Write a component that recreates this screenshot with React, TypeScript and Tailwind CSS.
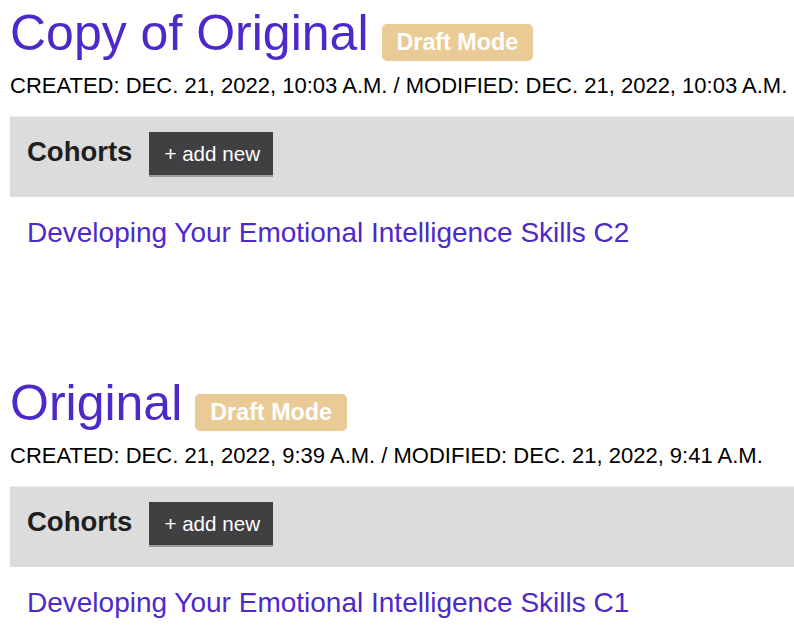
const records = [
  {
    title: "Copy of Original",
    created: "DEC. 21, 2022, 10:03 A.M.",
    modified: "DEC. 21, 2022, 10:03 A.M.",
    cohorts: ["Developing Your Emotional Intelligence Skills C2"],
  },
  {
    title: "Original",
    created: "DEC. 21, 2022, 9:39 A.M.",
    modified: "DEC. 21, 2022, 9:41 A.M.",
    cohorts: ["Developing Your Emotional Intelligence Skills C1"],
  },
];

function Record({ title, created, modified, cohorts }: (typeof records)[number]) {
  return (
    <section className="flex flex-col">
      <div className="flex items-baseline gap-[13px]">
        <h1 className="text-[50px] leading-[56px] font-normal text-[#4d29c9]">{title}</h1>
        <span className="rounded-[5px] bg-[#ebcb95] px-[15px] py-[6px] text-[23.3px] leading-[25px] font-bold text-white">
          Draft Mode
        </span>
      </div>
      <p className="mt-[12px] text-[22px] leading-[26px] whitespace-nowrap text-black">
        CREATED: {created} / MODIFIED: {modified}
      </p>
      <div className="mt-[17px] flex h-[81px] items-baseline gap-[17px] border-t border-[#eeeeee] bg-[#dcdcdc] pt-[15px] pl-[17px]">
        <h2 className="text-[27.5px] leading-[32px] font-bold text-[#1f1f1f]">Cohorts</h2>
        <button className="border-b-2 border-[#9a9a9a] bg-[#404042] pt-[10px] pb-[9px] pr-[13px] pl-[15px] text-[20.6px] leading-[24px] text-white">
          + add new
        </button>
      </div>
      <div className="mt-[20px] flex flex-col pl-[17px]">
        {cohorts.map((c) => (
          <a key={c} href="#" className="text-[28px] leading-[32px] text-[#4d29c9]">
            {c}
          </a>
        ))}
      </div>
    </section>
  );
}

export default function App() {
  return (
    <div
      className="flex min-h-[630px] flex-col gap-[126px] bg-white pt-[5px] pl-[10px]"
      style={{ fontFamily: '"Liberation Sans", Arial, sans-serif' }}
    >
      {records.map((r) => (
        <Record key={r.title} {...r} />
      ))}
    </div>
  );
}
